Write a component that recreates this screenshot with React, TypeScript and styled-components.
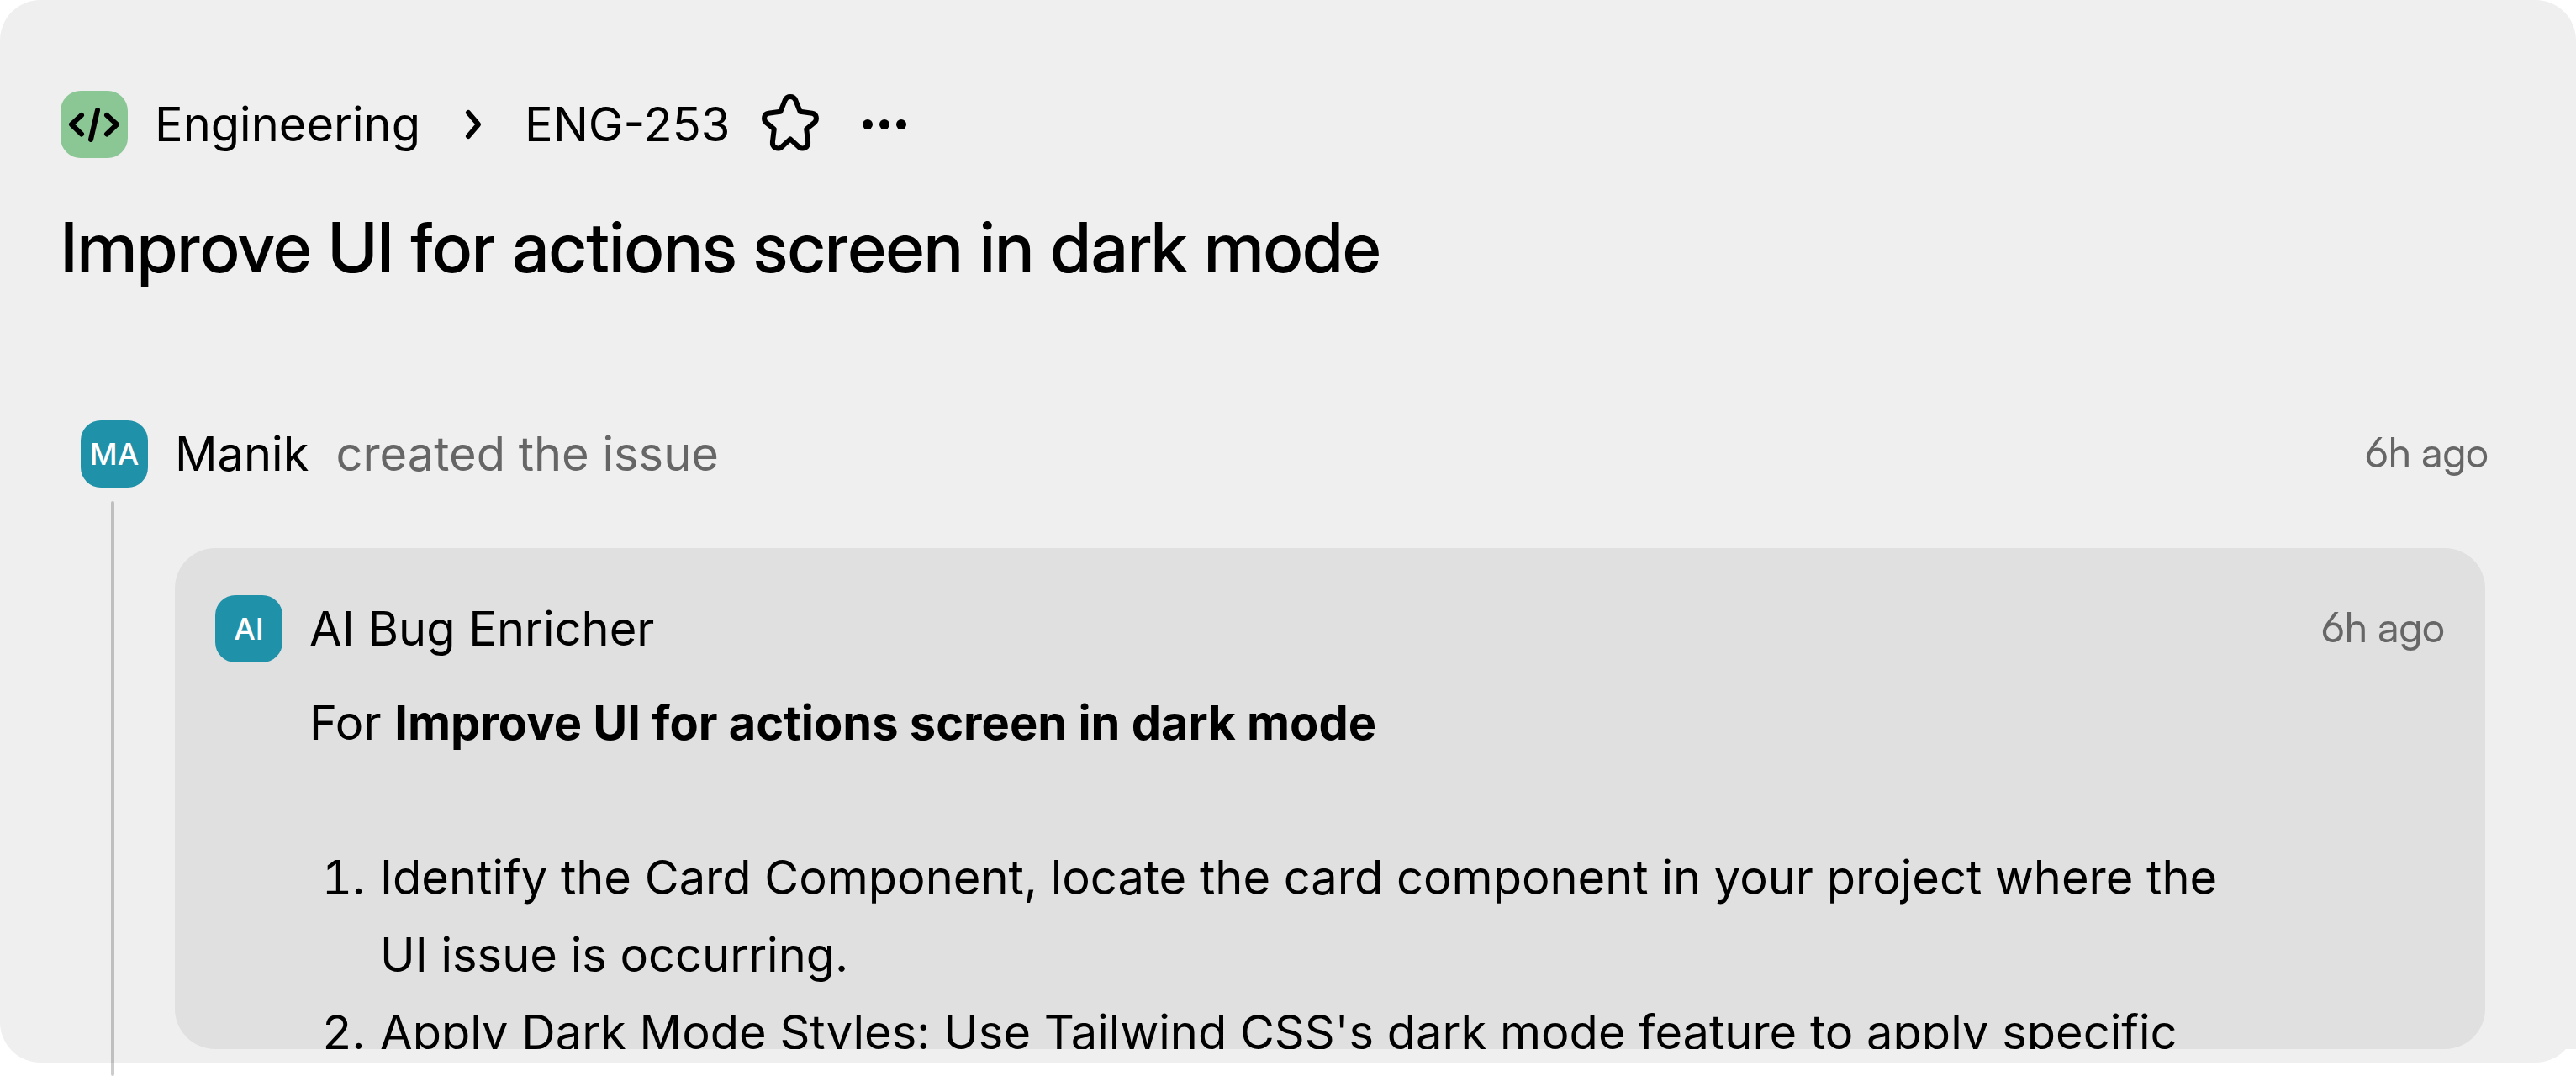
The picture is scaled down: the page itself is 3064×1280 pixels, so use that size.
import React from "react";
import styled, { createGlobalStyle } from "styled-components";

const GlobalStyle = createGlobalStyle`
  * { box-sizing: border-box; }
  body {
    margin: 0;
    background: #ffffff;
    color: #000000;
    font-family: Inter, "Liberation Sans", sans-serif;
    font-size: 56px;
    line-height: 80px;
    overflow: hidden;
  }
  button { font: inherit; color: inherit; }
`;

const Page = styled.div`
  height: 100vh;
  padding-bottom: 16px;
`;

const Panel = styled.main`
  height: 100%;
  display: flex;
  flex-direction: column;
  padding: 108px 0 16px 72px;
  border-radius: 48px;
  background: #efefef;
`;

const Breadcrumb = styled.nav`
  display: flex;
  align-items: center;
`;

const Crumb = styled.a`
  color: inherit;
  text-decoration: none;
  display: flex;
  align-items: center;
  gap: 32px;
`;

const TeamIcon = styled.span`
  display: grid;
  place-items: center;
  width: 80px;
  height: 80px;
  border-radius: 24px;
  background: #8ac795;
`;

const Separator = styled.span`
  display: flex;
  margin: 0 22px;
`;

const IconButton = styled.button`
  display: grid;
  place-items: center;
  width: 80px;
  height: 80px;
  padding: 0;
  border: 0;
  background: none;
`;

const Actions = styled.div`
  display: flex;
  gap: 32px;
  margin-left: 32px;
`;

const Title = styled.h1`
  margin: 56px 0 0;
  font-family: "Inter Display", Inter, sans-serif;
  font-size: 83px;
  line-height: 100px;
  font-weight: 500;
`;

const Timeline = styled.section`
  display: flex;
  flex-direction: column;
  flex: 1;
  min-height: 0;
  margin-top: 156px;
  padding: 0 104px 0 24px;
  background: #efefef;
`;

const EventHeader = styled.header`
  display: flex;
  align-items: center;
  gap: 32px;
`;

const Avatar = styled.span`
  display: grid;
  place-items: center;
  width: 80px;
  height: 80px;
  border-radius: 24px;
  background: #1f91a9;
  color: #ffffff;
  font-size: 36px;
  font-weight: 500;
  line-height: 48px;
`;

const Muted = styled.span`
  color: #666666;
`;

const Time = styled.time`
  margin-left: auto;
  color: #666666;
  font-family: "Inter Display", Inter, sans-serif;
  font-feature-settings: "cv03";
  font-size: 49px;
  line-height: 78px;
  padding-bottom: 2px;
`;

const Thread = styled.div`
  display: flex;
  flex: 1;
  min-height: 0;
`;

const Rail = styled.div`
  flex: none;
  width: 4px;
  margin: 16px 72px -32px 36px;
  border-radius: 4px;
  background: rgba(0, 0, 0, 0.2);
`;

const Card = styled.article`
  flex: 1;
  min-width: 0;
  margin: 72px 4px 0 0;
  padding: 56px 48px 0;
  border-radius: 48px;
  background: #e0e0e0;
  overflow: hidden;
`;

const CardBody = styled.div`
  padding: 26px 208px 0 112px;
  line-height: 92px;
`;

const Paragraph = styled.p`
  margin: 0 0 92px;

  strong { font-weight: 700; }
`;

const Steps = styled.ol`
  margin: 0;
  padding: 0;
  list-style: none;
  counter-reset: step;
`;

const Step = styled.li`
  display: flex;
  gap: 18px;
  counter-increment: step;

  &::before {
    content: counter(step) ".";
    flex: none;
    width: 66px;
    text-align: right;
    font-variant-numeric: tabular-nums;
  }
`;

const CodeGlyph = () => (
  <svg width="80" height="80" viewBox="0 0 80 80" fill="none" stroke="#000" strokeWidth="6" strokeLinecap="round" strokeLinejoin="round" aria-hidden="true">
    <path d="M25 29 13 40l12 11.5M55 29l12 11-12 11.5M44 23l-8 35" />
  </svg>
);

const ChevronGlyph = () => (
  <svg width="80" height="80" viewBox="0 0 80 80" fill="none" stroke="#000" strokeWidth="6" strokeLinecap="round" strokeLinejoin="round" aria-hidden="true">
    <path d="M35 26l12 14-12 14" />
  </svg>
);

const StarGlyph = () => (
  <svg width="80" height="80" viewBox="0 0 80 80" fill="none" stroke="#000" strokeWidth="6" strokeLinejoin="round" aria-hidden="true">
    <path d="M33.8 11c2.4-5.3 10-5.3 12.4 0L51.7 24.8 66 26.7c5.2.7 6.6 7.4 2.6 11.2L59.2 45.5 61.1 61c.6 6.4-6 9.4-10.4 6.2L40 57.4l-10.7 9.8c-4.4 3.2-11 .2-10.4-6.2l1.9-15.5-9.4-7.6c-4-3.8-2.6-10.5 2.6-11.2l14.3-1.9Z" />
  </svg>
);

const DotsGlyph = () => (
  <svg width="80" height="80" viewBox="0 0 80 80" aria-hidden="true">
    <circle cx="20" cy="40" r="6" />
    <circle cx="40" cy="40" r="6" />
    <circle cx="60" cy="40" r="6" />
  </svg>
);

export default function App() {
  return (
    <Page>
      <GlobalStyle />
      <Panel>
        <Breadcrumb aria-label="Breadcrumb">
          <Crumb href="#engineering">
            <TeamIcon><CodeGlyph /></TeamIcon>
            Engineering
          </Crumb>
          <Separator><ChevronGlyph /></Separator>
          <Crumb href="#eng-253">ENG-253</Crumb>
          <Actions>
            <IconButton type="button" aria-label="Add to favorites"><StarGlyph /></IconButton>
            <IconButton type="button" aria-label="More actions"><DotsGlyph /></IconButton>
          </Actions>
        </Breadcrumb>
        <Title>Improve UI for actions screen in dark mode</Title>
        <Timeline>
          <EventHeader>
            <Avatar>MA</Avatar>
            <span>Manik</span>
            <Muted>created the issue</Muted>
            <Time>6h ago</Time>
          </EventHeader>
          <Thread>
            <Rail />
            <Card>
              <EventHeader>
                <Avatar>AI</Avatar>
                <span>AI Bug Enricher</span>
                <Time>6h ago</Time>
              </EventHeader>
              <CardBody>
                <Paragraph>
                  For <strong>Improve UI for actions screen in dark mode</strong>
                </Paragraph>
                <Steps>
                  <Step>Identify the Card Component, locate the card component in your project where the UI issue is occurring.</Step>
                  <Step>Apply Dark Mode Styles: Use Tailwind CSS's dark mode feature to apply specific</Step>
                </Steps>
              </CardBody>
            </Card>
          </Thread>
        </Timeline>
      </Panel>
    </Page>
  );
}
